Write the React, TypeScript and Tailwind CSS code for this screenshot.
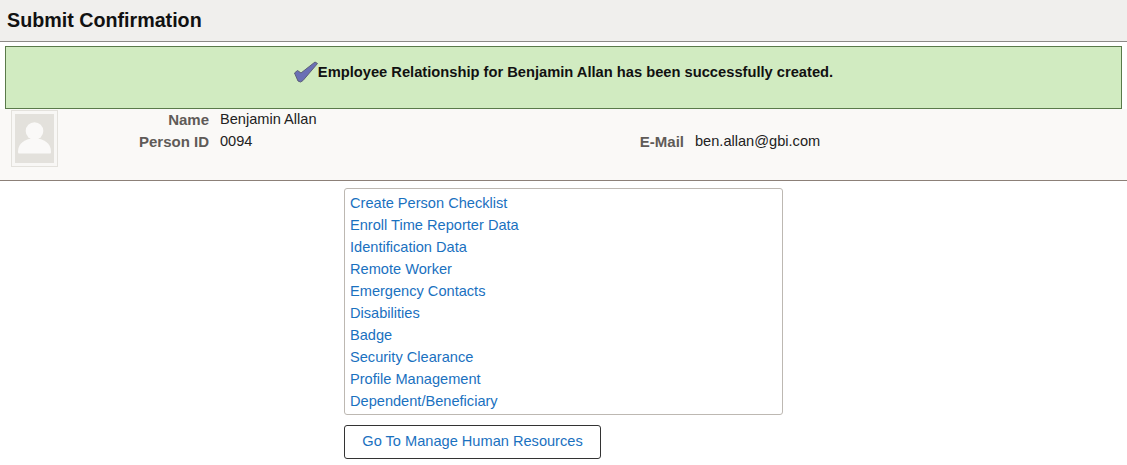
import React from 'react';

const links = [
  'Create Person Checklist',
  'Enroll Time Reporter Data',
  'Identification Data',
  'Remote Worker',
  'Emergency Contacts',
  'Disabilities',
  'Badge',
  'Security Clearance',
  'Profile Management',
  'Dependent/Beneficiary',
];

function CheckIcon() {
  return (
    <svg width="24" height="22" viewBox="0 0 24 22" className="shrink-0">
      <path
        d="M0.5 12 L3.5 9.5 L7 12 L21 1 L23.5 2.5 L9 19.5 L6.5 21 L4 20 Z"
        fill="#6a6fb5"
        stroke="#5b5e78"
        strokeWidth="1"
      />
    </svg>
  );
}

function PersonPhoto() {
  return (
    <div className="w-[47px] h-[57px] shrink-0 border border-[#e3e1dc] p-[3px] bg-[#f8f7f5]">
      <div className="w-full h-full bg-[#e3e1dc] flex items-center justify-center">
        <svg width="33" height="33" viewBox="0 0 33 33">
          <circle cx="16.5" cy="9" r="8.8" fill="#faf9f8" />
          <path d="M1 31.5 Q0 31.5 0 30 C0 21 7 16.5 16.5 16.5 C26 16.5 33 21 33 30 Q33 31.5 32 31.5 Z" fill="#faf9f8" />
        </svg>
      </div>
    </div>
  );
}

export default function App() {
  return (
    <div className="font-['Liberation_Sans',Arial,sans-serif] text-[14.6px] bg-white min-h-[465px]">
      <div className="h-[42px] bg-[#f0efed] border-b border-[#8c8a86] flex items-center pl-[7px]">
        <h1 className="text-[19.7px] font-bold text-[#111]">Submit Confirmation</h1>
      </div>

      <div className="mx-[5px] mt-[4px] h-[63px] bg-[#d1ebc1] border border-[#5a7a4a] flex items-center justify-center pb-[11px]">
        <CheckIcon />
        <span className="font-bold text-[14.7px] text-[#111]">Employee Relationship for Benjamin Allan has been successfully created.</span>
      </div>

      <div className="h-[72px] bg-[#faf9f7] border-b border-[#8c8078] flex pl-[11px] pt-[1px]">
        <PersonPhoto />
        <div className="grid grid-cols-[151px_200px_1fr] auto-rows-[22px] items-center w-full -mt-[1px]">
          <div className="text-right text-[15px] font-bold text-[#5f5b58]">Name</div>
          <div className="pl-[11px] text-[#222]">Benjamin Allan</div>
          <div />
          <div className="text-right text-[15px] font-bold text-[#5f5b58]">Person ID</div>
          <div className="pl-[11px] text-[#222]">0094</div>
          <div className="flex">
            <div className="w-[275px] text-right text-[15px] font-bold text-[#5f5b58]">E-Mail</div>
            <div className="pl-[11px] text-[#222]">ben.allan@gbi.com</div>
          </div>
        </div>
      </div>

      <div className="ml-[344px] w-[439px] mt-[7px] border border-[#bdb8b2] rounded-[3px] pl-[5px] pt-[3px] pb-[2px]">
        {links.map((label) => (
          <a key={label} href="#" className="block h-[22px] leading-[22px] text-[#1a71bf]">
            {label}
          </a>
        ))}
      </div>

      <button className="block ml-[344px] mt-[10px] w-[257px] h-[34px] border border-[#333] rounded-[3px] bg-white text-[#1a71bf]">
        Go To Manage Human Resources
      </button>
    </div>
  );
}
